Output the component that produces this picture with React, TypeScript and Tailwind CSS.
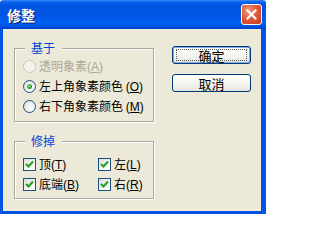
import React from "react";

const font = { fontFamily: '"Noto Sans CJK SC", "Liberation Sans", sans-serif' };

function Mn({ c }: { c: string }) {
  return (
    <span style={{ fontFamily: '"Liberation Sans", sans-serif' }}>
      (<span className="underline underline-offset-1">{c}</span>)
    </span>
  );
}

function Radio({ checked, disabled }: { checked?: boolean; disabled?: boolean }) {
  return (
    <span
      className={
        "flex h-[13px] w-[13px] shrink-0 items-center justify-center rounded-full border " +
        (disabled
          ? "border-[#CAC8BB] bg-[#F4F3EE]"
          : "border-[#1C5180] bg-[radial-gradient(circle_at_65%_65%,#FFFFFF_0%,#F0F0EA_50%,#D4D2C6_100%)]")
      }
    >
      {checked && (
        <span className="h-[5px] w-[5px] rounded-full bg-[radial-gradient(circle_at_40%_40%,#8CE28C_0%,#21A121_60%,#108C10_100%)]" />
      )}
    </span>
  );
}

function Check() {
  return (
    <span className="flex h-[13px] w-[13px] shrink-0 items-center justify-center border border-[#1C5180] bg-[linear-gradient(135deg,#DCDBD5_0%,#F6F6F3_60%,#FFFFFF_100%)]">
      <svg width="9" height="9" viewBox="0 0 9 9">
        <path d="M1 4 L3.5 6.5 L8 1.5" stroke="#21A121" strokeWidth="2" fill="none" />
      </svg>
    </span>
  );
}

function Group({ title, children, h }: { title: string; children: React.ReactNode; h: string }) {
  return (
    <div
      className={
        "relative w-[140px] border border-[#ACA899] shadow-[inset_1px_1px_0_#FFFFFF,1px_1px_0_#FFFFFF] " + h
      }
    >
      <span className="absolute left-[10px] top-[-7px] bg-[#ECE9D8] pl-[6px] pr-[7px] text-[12px] leading-[12px] text-[#0046D5]">
        {title}
      </span>
      {children}
    </div>
  );
}

export default function App() {
  return (
    <div className="flex h-[214px] w-[266px] flex-col text-[12px] leading-[12px] text-black" style={font}>
      {/* title bar */}
      <div className="flex h-[29px] shrink-0 items-center rounded-t-[3px] bg-[linear-gradient(to_bottom,#3A8CF8_0px,#0A62EC_2px,#0054E3_5px,#0055E5_16px,#0060F2_23px,#0054E3_26px,#0040CC_29px)] pl-[7px] pr-[4px]">
        <span className="flex-1 pt-[1px] text-[14px] font-bold leading-[14px] text-white [text-shadow:1px_1px_0_#0A1F70]">
          修整
        </span>
        <div className="flex h-[21px] w-[21px] items-center justify-center rounded-[3px] border border-white bg-[radial-gradient(circle_at_35%_30%,#F0A080_0%,#E2593A_45%,#C93A18_100%)]">
          <svg width="11" height="11" viewBox="0 0 11 11">
            <path d="M1.5 1.5 L9.5 9.5 M9.5 1.5 L1.5 9.5" stroke="white" strokeWidth="2.2" strokeLinecap="square" />
          </svg>
        </div>
      </div>
      {/* body with frame */}
      <div className="flex flex-1 border-b-[3px] border-l-[3px] border-r-[5px] border-[#0054E3] bg-[#ECE9D8]">
        <div className="flex flex-col pl-[11px] pt-[19px]">
          <Group title="基于" h="h-[74px]">
            <div className="flex flex-col gap-[7px] pl-[8px] pt-[11px]">
              <div className="flex items-center gap-[3px] text-[#ACA899]">
                <Radio disabled />
                <span>
                  透明象素<Mn c="A" />
                </span>
              </div>
              <div className="flex items-center gap-[3px]">
                <Radio checked />
                <span>
                  左上角象素颜色 <Mn c="O" />
                </span>
              </div>
              <div className="flex items-center gap-[3px]">
                <Radio />
                <span>
                  右下角象素颜色 <Mn c="M" />
                </span>
              </div>
            </div>
          </Group>
          <div className="h-[19px]" />
          <Group title="修掉" h="h-[58px]">
            <div className="grid grid-cols-[75px_1fr] gap-y-[7px] pl-[8px] pt-[16px]">
              <div className="flex items-center gap-[3px]">
                <Check />
                <span>
                  顶<Mn c="T" />
                </span>
              </div>
              <div className="flex items-center gap-[3px]">
                <Check />
                <span>
                  左<Mn c="L" />
                </span>
              </div>
              <div className="flex items-center gap-[3px]">
                <Check />
                <span>
                  底端<Mn c="B" />
                </span>
              </div>
              <div className="flex items-center gap-[3px]">
                <Check />
                <span>
                  右<Mn c="R" />
                </span>
              </div>
            </div>
          </Group>
        </div>
        <div className="flex flex-col gap-[10px] pl-[18px] pt-[17px]">
          <div className="flex h-[18px] w-[79px] items-center justify-center rounded-[3px] border border-[#003C74] bg-[linear-gradient(to_bottom,#FFFFFF_0%,#F3F3EF_60%,#E3E2DA_100%)] shadow-[inset_0_0_0_1px_#86A9EE]">
            <div className="flex h-[12px] w-[71px] items-center justify-center border border-dotted border-[#555]">
              <span className="text-[13px] leading-[13px]">确定</span>
            </div>
          </div>
          <div className="flex h-[18px] w-[79px] items-center justify-center rounded-[3px] border border-[#003C74] bg-[linear-gradient(to_bottom,#FFFFFF_0%,#F3F3EF_60%,#E3E2DA_100%)]">
            <span className="text-[13px] leading-[13px]">取消</span>
          </div>
        </div>
      </div>
    </div>
  );
}
